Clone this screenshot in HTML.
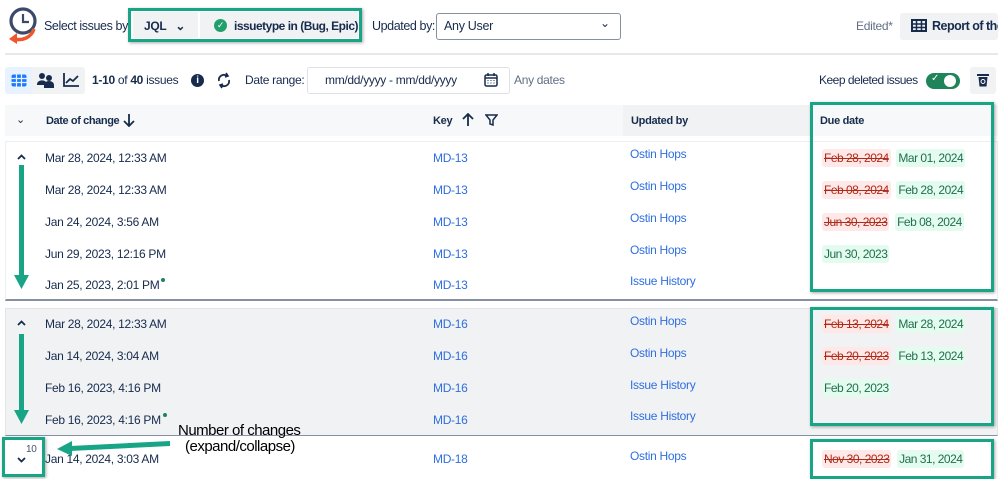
<!DOCTYPE html>
<html><head><meta charset="utf-8">
<style>
*{box-sizing:border-box;margin:0;padding:0}
body{width:998px;height:473px;overflow:hidden;background:#fff;font-family:"Liberation Sans",Arial,sans-serif;color:#172b4d;position:relative;font-size:12px;letter-spacing:-0.3px}
.a{position:absolute;white-space:nowrap}
.lnk{color:#2f6fde}
.b{font-weight:bold}
.old{background:#ffe9e8;color:#ae2a19;text-decoration:line-through;padding:2px 2px;border-radius:3px}
.new{background:#e3fcef;color:#216e4e;padding:2px 2px;border-radius:3px}
.dd{font-size:12px;letter-spacing:-0.5px}
.gb{position:absolute;border:3px solid #17a585;box-shadow:1px 1px 3px rgba(0,0,0,.35)}
.hd{font-size:11px;font-weight:bold}
.dot{display:inline-block;width:4px;height:4px;border-radius:50%;background:#1f845a;vertical-align:7px;margin-left:2px}
</style></head><body>
<svg class="a" style="left:6px;top:5px" width="34" height="42" viewBox="0 0 34 42">
<circle cx="17" cy="16" r="12" fill="none" stroke="#3b4a6b" stroke-width="3.2"/>
<path d="M17 9v8h6" fill="none" stroke="#3b4a6b" stroke-width="2.2"/>
<path d="M28 24c-3 9-12 12-20 10" fill="none" stroke="#f0562b" stroke-width="3.5"/>
<path d="M3 34l8-6v11z" fill="#f0562b"/>
</svg>
<div class="a" style="left:44px;top:19px;font-size:12.5px;letter-spacing:-0.4px">Select issues by</div>
<div class="a" style="left:133px;top:12px;width:65px;height:26px;background:#f1f2f4"></div>
<div class="a b" style="left:144px;top:19px;font-size:12px">JQL &nbsp;&nbsp;⌄</div>
<div class="a" style="left:200px;top:12px;width:158px;height:26px;background:#f1f2f4"></div>
<div class="a" style="left:214px;top:19px;width:13px;height:13px;border-radius:50%;background:#22a06b;color:#fff;font-size:9px;text-align:center;line-height:13px">✓</div>
<div class="a b" style="left:234px;top:19px;font-size:12px;letter-spacing:-0.5px">issuetype in (Bug, Epic)</div>
<div class="gb" style="left:128px;top:8px;width:234px;height:34px"></div>
<div class="a" style="left:372px;top:19px;font-size:12.5px;letter-spacing:-0.4px">Updated by:</div>
<div class="a" style="left:436px;top:13px;width:185px;height:27px;border:1px solid #8590a2;border-radius:3px"></div>
<div class="a" style="left:444px;top:19px;font-size:12.5px">Any User</div>
<div class="a" style="left:600px;top:16px;font-size:12px">⌄</div>
<div class="a" style="left:856px;top:19px;font-size:12px;color:#626f86">Edited*</div>
<div class="a" style="left:900px;top:13px;width:98px;height:27px;background:#f1f2f4;border-radius:3px"></div>
<svg class="a" style="left:911px;top:19px" width="16" height="13"><rect x="1" y="1" width="14" height="11" fill="none" stroke="#172b4d" stroke-width="2"/><path d="M1 5h14M1 8.5h14M5.5 1v11M10.5 1v11" stroke="#172b4d" stroke-width="1.5"/></svg>
<div class="a b" style="left:932px;top:19px;font-size:12.5px;letter-spacing:-0.5px">Report of the</div>
<div class="a" style="left:5px;top:53px;width:993px;height:2px;background:#e6e8ec"></div>
<div class="a" style="left:5px;top:67px;width:80px;height:27px;background:#f1f2f4;border-radius:3px"></div>
<div class="a" style="left:5px;top:67px;width:27px;height:27px;background:#e9f2ff;border-radius:3px"></div>
<svg class="a" style="left:11px;top:74px" width="16" height="13"><rect x="0.5" y="0.5" width="15" height="12" rx="2" fill="#1d7afc"/><path d="M0 4.5h16M0 8.5h16M5.5 0v13M10.5 0v13" stroke="#e9f2ff" stroke-width="1.2"/></svg>
<svg class="a" style="left:37px;top:72px" width="18" height="16"><circle cx="5" cy="4" r="3" fill="#172b4d"/><circle cx="12" cy="6" r="3" fill="#172b4d"/><path d="M0 12a5 4 0 0 1 9-2v3H0z" fill="#172b4d"/><path d="M7 16v-3a5 4 0 0 1 10 0v3z" fill="#172b4d"/></svg>
<svg class="a" style="left:63px;top:72px" width="17" height="15"><path d="M1 1v13h15" fill="none" stroke="#172b4d" stroke-width="1.8"/><path d="M3 11l4-4 3 2 5-5" fill="none" stroke="#172b4d" stroke-width="1.8"/></svg>
<div class="a" style="left:92px;top:73px;font-size:12px"><b>1-10</b> of <b>40</b> issues</div>
<div class="a" style="left:191px;top:74px;width:13px;height:13px;border-radius:50%;background:#172b4d;color:#fff;font-size:10px;font-weight:bold;text-align:center;line-height:13px">i</div>
<svg class="a" style="left:216px;top:72px" width="16" height="17"><path d="M3 9a5 5 0 0 1 8-5M13 8a5 5 0 0 1-8 5" fill="none" stroke="#172b4d" stroke-width="1.8"/><path d="M10 1l2 3-3 1M6 16l-2-3 3-1" fill="none" stroke="#172b4d" stroke-width="1.6"/></svg>
<div class="a" style="left:245px;top:73px;font-size:12px">Date range:</div>
<div class="a" style="left:307px;top:67px;width:203px;height:27px;border:1px solid #dfe1e6;border-radius:3px"></div>
<div class="a" style="left:325px;top:73px;font-size:12px">mm/dd/yyyy - mm/dd/yyyy</div>
<svg class="a" style="left:484px;top:73px" width="14" height="14"><rect x="1" y="2" width="12" height="11" rx="1.5" fill="none" stroke="#172b4d" stroke-width="1.5"/><path d="M1 5h12M4 0v3M10 0v3" stroke="#172b4d" stroke-width="1.5"/><path d="M3.5 7.5h1M6.5 7.5h1M9.5 7.5h1M3.5 10h1M6.5 10h1M9.5 10h1" stroke="#172b4d"/></svg>
<div class="a" style="left:514px;top:73px;font-size:12px;color:#626f86">Any dates</div>
<div class="a" style="left:819px;top:73px;font-size:12px;letter-spacing:-0.5px">Keep deleted issues</div>
<div class="a" style="left:926px;top:73px;width:34px;height:16px;border-radius:8px;background:#1f845a"></div>
<div class="a" style="left:944px;top:75px;width:12px;height:12px;border-radius:50%;background:#fff"></div>
<div class="a" style="left:931px;top:73px;font-size:10px;color:#fff">✓</div>
<div class="a" style="left:970px;top:67px;width:26px;height:27px;background:#f1f2f4;border-radius:3px"></div>
<svg class="a" style="left:977px;top:73px" width="12" height="14"><path d="M0 2h12" stroke="#172b4d" stroke-width="2"/><path d="M1.5 4h9l-1 9.5h-7z" fill="#172b4d"/><circle cx="6" cy="8.5" r="2" fill="none" stroke="#fff" stroke-width="1"/></svg>
<div class="a" style="left:5px;top:105px;width:993px;height:31px;background:#f7f8f9"></div>
<div class="a" style="left:623px;top:105px;width:187px;height:31px;background:#f1f2f4"></div>
<div class="a" style="left:16px;top:113px;font-size:11px">⌄</div>
<div class="a hd" style="left:46px;top:115px;letter-spacing:-0.4px">Date of change</div>
<svg class="a" style="left:123px;top:113px" width="12" height="14"><path d="M6 1v12M1 8l5 5 5-5" fill="none" stroke="#172b4d" stroke-width="1.8"/></svg>
<div class="a hd" style="left:433px;top:115px">Key</div>
<svg class="a" style="left:462px;top:113px" width="12" height="14"><path d="M6 13V1M1 6l5-5 5 5" fill="none" stroke="#172b4d" stroke-width="1.8"/></svg>
<svg class="a" style="left:485px;top:114px" width="13" height="12"><path d="M1 1h11L8 6v5L5 10V6z" fill="none" stroke="#172b4d" stroke-width="1.5"/></svg>
<div class="a hd" style="left:631px;top:115px">Updated by</div>
<div class="a hd" style="left:820px;top:115px">Due date</div>
<div class="a" style="left:5px;top:141px;width:993px;height:160px;border:1px solid #eceef1;border-bottom:2px solid #8590a2"></div>
<svg class="a" style="left:17px;top:154px" width="9" height="6"><path d="M1 5l3.5-3.5L8 5" fill="none" stroke="#172b4d" stroke-width="1.8"/></svg>
<div class="a" style="left:45px;top:151px">Mar 28, 2024, 12:33 AM</div>
<div class="a" style="left:45px;top:183px">Mar 28, 2024, 12:33 AM</div>
<div class="a" style="left:45px;top:215px">Jan 24, 2024, 3:56 AM</div>
<div class="a" style="left:45px;top:247px">Jun 29, 2023, 12:16 PM</div>
<div class="a" style="left:45px;top:278px">Jan 25, 2023, 2:01 PM<span class="dot"></span></div>
<div class="a lnk" style="left:433px;top:151px">MD-13</div>
<div class="a lnk" style="left:433px;top:183px">MD-13</div>
<div class="a lnk" style="left:433px;top:215px">MD-13</div>
<div class="a lnk" style="left:433px;top:247px">MD-13</div>
<div class="a lnk" style="left:433px;top:278px">MD-13</div>
<div class="a lnk" style="left:630px;top:147px">Ostin Hops</div>
<div class="a lnk" style="left:630px;top:179px">Ostin Hops</div>
<div class="a lnk" style="left:630px;top:211px">Ostin Hops</div>
<div class="a lnk" style="left:630px;top:243px">Ostin Hops</div>
<div class="a lnk" style="left:630px;top:274px">Issue History</div>
<div class="a dd" style="left:822px;top:151px"><span class="old">Feb 28, 2024</span>&nbsp; <span class="new">Mar 01, 2024</span></div>
<div class="a dd" style="left:822px;top:183px"><span class="old">Feb 08, 2024</span>&nbsp; <span class="new">Feb 28, 2024</span></div>
<div class="a dd" style="left:822px;top:215px"><span class="old">Jun 30, 2023</span>&nbsp; <span class="new">Feb 08, 2024</span></div>
<div class="a dd" style="left:822px;top:247px"><span class="new">Jun 30, 2023</span></div>
<div class="gb" style="left:810px;top:102px;width:184px;height:190px"></div>
<div class="a" style="left:5px;top:308px;width:993px;height:128px;background:#f1f2f4;border:1px solid #e2e4e8;border-bottom:1px solid #8590a2"></div>
<svg class="a" style="left:17px;top:320px" width="9" height="6"><path d="M1 5l3.5-3.5L8 5" fill="none" stroke="#172b4d" stroke-width="1.8"/></svg>
<div class="a" style="left:45px;top:317px">Mar 28, 2024, 12:33 AM</div>
<div class="a" style="left:45px;top:349px">Jan 14, 2024, 3:04 AM</div>
<div class="a" style="left:45px;top:381px">Feb 16, 2023, 4:16 PM</div>
<div class="a" style="left:45px;top:413px">Feb 16, 2023, 4:16 PM<span class="dot"></span></div>
<div class="a lnk" style="left:433px;top:317px">MD-16</div>
<div class="a lnk" style="left:433px;top:349px">MD-16</div>
<div class="a lnk" style="left:433px;top:381px">MD-16</div>
<div class="a lnk" style="left:433px;top:413px">MD-16</div>
<div class="a lnk" style="left:630px;top:314px">Ostin Hops</div>
<div class="a lnk" style="left:630px;top:346px">Ostin Hops</div>
<div class="a lnk" style="left:630px;top:378px">Issue History</div>
<div class="a lnk" style="left:630px;top:409px">Issue History</div>
<div class="a dd" style="left:822px;top:317px"><span class="old">Feb 13, 2024</span>&nbsp; <span class="new">Mar 28, 2024</span></div>
<div class="a dd" style="left:822px;top:349px"><span class="old">Feb 20, 2023</span>&nbsp; <span class="new">Feb 13, 2024</span></div>
<div class="a dd" style="left:822px;top:381px"><span class="new">Feb 20, 2023</span></div>
<div class="gb" style="left:810px;top:307px;width:184px;height:119px"></div>
<div class="a" style="left:45px;top:452px">Jan 14, 2024, 3:03 AM</div>
<div class="a lnk" style="left:433px;top:452px">MD-18</div>
<div class="a lnk" style="left:630px;top:449px">Ostin Hops</div>
<div class="a dd" style="left:822px;top:452px"><span class="old">Nov 30, 2023</span>&nbsp; <span class="new">Jan 31, 2024</span></div>
<div class="gb" style="left:810px;top:439px;width:184px;height:40px"></div>
<div class="gb" style="left:2px;top:437px;width:43px;height:40px"></div>
<div class="a" style="left:26px;top:444px;font-size:10px;color:#44546f">10</div>
<svg class="a" style="left:17px;top:457px" width="9" height="6"><path d="M1 1l3.5 3.5L8 1" fill="none" stroke="#172b4d" stroke-width="1.8"/></svg>
<svg class="a" style="left:0;top:0" width="998" height="473">
<g fill="#17a585" stroke="none">
<rect x="19" y="165" width="5" height="112"/><path d="M14 275h15l-7.5 14z"/>
<rect x="19" y="334" width="5" height="78"/><path d="M14 410h15l-7.5 14z"/>
<path d="M70 446L170 441v5L70 451z"/><path d="M57 449l15-8v15z"/>
</g></svg>
<div class="a" style="left:178px;top:422px;font-size:15px;color:#000;letter-spacing:-0.5px">Number of changes</div>
<div class="a" style="left:185px;top:438px;font-size:15px;color:#000;letter-spacing:-0.5px">(expand/collapse)</div>
</body></html>
